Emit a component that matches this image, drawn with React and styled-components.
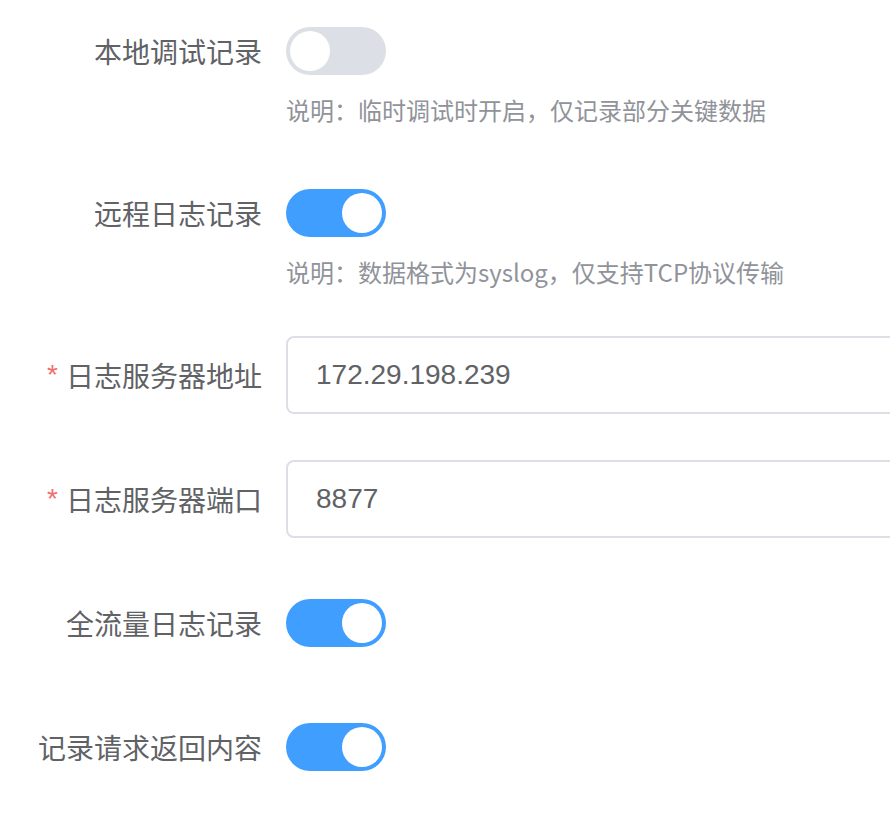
import styled, { createGlobalStyle } from "styled-components"

const Global = createGlobalStyle`
  body {
    margin: 0;
    background: #fff;
    overflow: hidden;
    font-family: "Noto Sans CJK SC", "Noto Sans", sans-serif;
  }
`

const Form = styled.div`
  display: flex;
  flex-direction: column;
  gap: 44px;
  padding-top: 11px;
`

const Item = styled.div`
  display: grid;
  grid-template-columns: 262px 1fr;
  column-gap: 24px;
`

const Label = styled.label`
  height: 80px;
  display: flex;
  align-items: center;
  justify-content: flex-end;
  font-size: 28px;
  color: #606266;
  white-space: nowrap;
  &::before {
    content: ${p => (p.$required ? '"*"' : "none")};
    color: #f56c6c;
    margin-right: 8px;
    font-family: "Liberation Sans", sans-serif;
  }
`

const Control = styled.div`
  display: flex;
  flex-direction: column;
  min-width: 0;
`

const Line = styled.div`
  height: 80px;
  display: flex;
  align-items: center;
`

const Help = styled.div`
  font-size: 24px;
  line-height: 38px;
  color: #909399;
  white-space: nowrap;
`

const Track = styled.button`
  position: relative;
  flex-shrink: 0;
  width: 100px;
  height: 48px;
  border: none;
  padding: 0;
  border-radius: 24px;
  background: ${p => (p.$on ? "#409eff" : "#dcdfe6")};
  cursor: pointer;
  &::after {
    content: "";
    position: absolute;
    top: 4px;
    left: ${p => (p.$on ? "56px" : "4px")};
    width: 40px;
    height: 40px;
    border-radius: 50%;
    background: #fff;
  }
`

const Input = styled.input`
  flex-shrink: 0;
  width: 700px;
  height: 78px;
  box-sizing: border-box;
  border: 2px solid #dcdfe6;
  border-radius: 8px;
  padding: 0 28px;
  font-size: 28px;
  font-family: "Liberation Sans", Arial, sans-serif;
  color: #606266;
  outline: none;
`

const SwitchRow = ({ label, on, help }) => (
  <Item>
    <Label>{label}</Label>
    <Control>
      <Line>
        <Track $on={on} />
      </Line>
      {help && <Help>{help}</Help>}
    </Control>
  </Item>
)

const InputRow = ({ label, value }) => (
  <Item>
    <Label $required>{label}</Label>
    <Control>
      <Line>
        <Input defaultValue={value} />
      </Line>
    </Control>
  </Item>
)

export default function App() {
  return (
    <>
      <Global />
      <Form>
        <SwitchRow label="本地调试记录" on={false} help="说明：临时调试时开启，仅记录部分关键数据" />
        <SwitchRow label="远程日志记录" on help="说明：数据格式为syslog，仅支持TCP协议传输" />
        <InputRow label="日志服务器地址" value="172.29.198.239" />
        <InputRow label="日志服务器端口" value="8877" />
        <SwitchRow label="全流量日志记录" on />
        <SwitchRow label="记录请求返回内容" on />
      </Form>
    </>
  )
}
